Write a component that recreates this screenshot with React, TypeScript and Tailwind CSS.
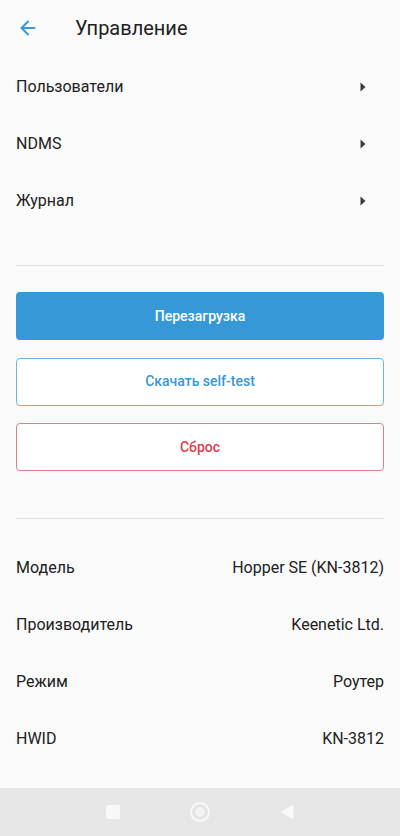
import { ArrowLeft } from 'lucide-react';

const menu = ['Пользователи', 'NDMS', 'Журнал'];

const info: [string, string][] = [
    ['Модель', 'Hopper SE (KN-3812)'],
    ['Производитель', 'Keenetic Ltd.'],
    ['Режим', 'Роутер'],
    ['HWID', 'KN-3812'],
];

function Caret() {
    return (
        <svg width="6" height="10" viewBox="0 0 6 10" className="mr-[34px]">
            <path d="M0.5 0.5 L5.5 5 L0.5 9.5 Z" fill="#3a3a44" />
        </svg>
    );
}

export default function App() {
    return (
        <div
            className="flex h-[836px] w-[400px] flex-col bg-[#fafafa] text-[#212121]"
            style={{ fontFamily: 'Roboto, "Noto Sans", sans-serif' }}
        >
            <header className="flex h-[58px] shrink-0 items-center pb-[2px]">
                <ArrowLeft className="ml-[17px] h-[22px] w-[22px] text-[#3a98d8]" strokeWidth={2.2} />
                <h1 className="ml-[36px] text-[20px] font-normal">Управление</h1>
            </header>

            <div className="flex flex-col">
                {menu.map((item) => (
                    <div key={item} className="flex h-[57px] items-center justify-between pl-4">
                        <span className="text-[16px]">{item}</span>
                        <Caret />
                    </div>
                ))}
            </div>

            <div className="mx-4 mt-[36px] h-px bg-[#e0e0e0]" />

            <div className="mx-4 mt-[26px] flex flex-col gap-[17.5px]">
                <button className="h-[48px] rounded-[4px] bg-[#3798d7] text-[14px] font-medium text-white">
                    Перезагрузка
                </button>
                <button className="h-[48px] rounded-[4px] border border-[#6fb3e2] bg-white text-[14px] font-medium text-[#3798d7]">
                    Скачать self-test
                </button>
                <button className="h-[48px] rounded-[4px] border border-[#e07f87] bg-white text-[14px] font-medium text-[#d8404c]">
                    Сброс
                </button>
            </div>

            <div className="mx-4 mt-[47px] h-px bg-[#e0e0e0]" />

            <div className="mt-[20px] flex flex-col">
                {info.map(([label, value]) => (
                    <div key={label} className="flex h-[57px] items-center justify-between px-4 text-[16px]">
                        <span>{label}</span>
                        <span>{value}</span>
                    </div>
                ))}
            </div>

            <div className="flex-1" />

            <nav className="flex h-[48px] shrink-0 items-center justify-center gap-[70px] bg-[#e6e6e6]">
                <div className="h-[14px] w-[14px] rounded-[2px] bg-[#f8f8f8]" />
                <div className="flex h-[20px] w-[20px] items-center justify-center rounded-full border-[2px] border-[#f8f8f8]">
                    <div className="h-[12px] w-[12px] rounded-full border border-[#dcdcdc] bg-[#f4f4f4]" />
                </div>
                <svg width="14" height="16" viewBox="0 0 14 16">
                    <path d="M13 1 L1 8 L13 15 Z" fill="#f8f8f8" strokeLinejoin="round" stroke="#f8f8f8" strokeWidth="1" />
                </svg>
            </nav>
        </div>
    );
}
